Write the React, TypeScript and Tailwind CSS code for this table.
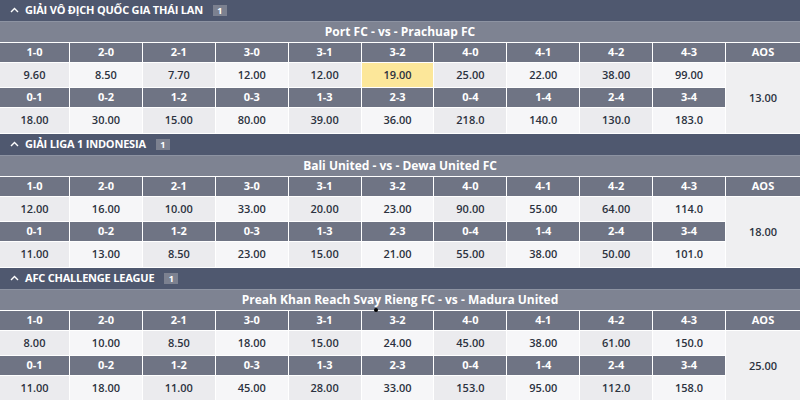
import React from "react";

type Section = {
  league: string;
  match: string;
  v1: string[];
  v2: string[];
  aos: string;
  hl?: number;
};

const H1 = ["1-0", "2-0", "2-1", "3-0", "3-1", "3-2", "4-0", "4-1", "4-2", "4-3"];
const H2 = ["0-1", "0-2", "1-2", "0-3", "1-3", "2-3", "0-4", "1-4", "2-4", "3-4"];

const sections: Section[] = [
  {
    league: "GIẢI VÔ ĐỊCH QUỐC GIA THÁI LAN",
    match: "Port FC - vs - Prachuap FC",
    v1: ["9.60", "8.50", "7.70", "12.00", "12.00", "19.00", "25.00", "22.00", "38.00", "99.00"],
    v2: ["18.00", "30.00", "15.00", "80.00", "39.00", "36.00", "218.0", "140.0", "130.0", "183.0"],
    aos: "13.00",
    hl: 5,
  },
  {
    league: "GIẢI LIGA 1 INDONESIA",
    match: "Bali United - vs - Dewa United FC",
    v1: ["12.00", "16.00", "10.00", "33.00", "20.00", "23.00", "90.00", "55.00", "64.00", "114.0"],
    v2: ["11.00", "13.00", "8.50", "23.00", "15.00", "21.00", "55.00", "38.00", "50.00", "101.0"],
    aos: "18.00",
  },
  {
    league: "AFC CHALLENGE LEAGUE",
    match: "Preah Khan Reach Svay Rieng FC - vs - Madura United",
    v1: ["8.00", "10.00", "8.50", "18.00", "15.00", "24.00", "45.00", "38.00", "61.00", "150.0"],
    v2: ["11.00", "18.00", "11.00", "45.00", "28.00", "33.00", "153.0", "95.00", "112.0", "158.0"],
    aos: "25.00",
  },
];

function HeadCell({ t }: { t: string }) {
  return (
    <div className="bg-[#6f7484] text-white font-bold text-[11px] flex items-center justify-center">
      {t}
    </div>
  );
}

function ValCell({ t, i, hl }: { t: string; i: number; hl?: boolean }) {
  const bg = hl ? "bg-[#fce79a]" : i % 2 === 0 ? "bg-[#ebebee]" : "bg-[#f6f6f8]";
  return (
    <div className={`${bg} text-[#2c3240] font-semibold text-[11px] flex items-center justify-center`}>
      {t}
    </div>
  );
}

function Block({ s }: { s: Section }) {
  return (
    <div className="flex flex-col">
      <div className="h-[22px] bg-[#4f586f] flex items-center pl-[10px] gap-[6px] border-b border-[#8d93a2]">
        <svg width="9" height="6" viewBox="0 0 9 6" className="mb-[1px]">
          <path d="M1 5 L4.5 1.5 L8 5" stroke="white" strokeWidth="1.4" fill="none" />
        </svg>
        <span className="text-white font-bold text-[11px] tracking-[-0.2px]">{s.league}</span>
        <span className="ml-[4px] bg-[#7c8190] text-white font-bold text-[9px] w-[14px] h-[11px] flex items-center justify-center">
          1
        </span>
      </div>
      <div className="h-[21px] bg-[#7e8392] border-b border-white text-white font-bold text-[12px] flex items-center justify-center">
        {s.match}
      </div>
      <div className="grid grid-cols-[69px_repeat(9,1fr)_74px] grid-rows-[19px_24px_19px_25px] gap-px bg-white border-b border-white">
        {H1.map((h) => (
          <HeadCell key={h} t={h} />
        ))}
        <HeadCell t="AOS" />
        {s.v1.map((v, i) => (
          <ValCell key={"a" + i} t={v} i={i} hl={s.hl === i} />
        ))}
        <div className="row-span-3 bg-[#efeff1] text-[#2c3240] font-semibold text-[11px] flex items-center justify-center">
          {s.aos}
        </div>
        {H2.map((h) => (
          <HeadCell key={h} t={h} />
        ))}
        {s.v2.map((v, i) => (
          <ValCell key={"b" + i} t={v} i={i} />
        ))}
      </div>
    </div>
  );
}

export default function App() {
  return (
    <div
      className="relative w-[800px] h-[400px] overflow-hidden bg-white"
      style={{ fontFamily: '"Open Sans", "Noto Sans", sans-serif' }}
    >
      {sections.map((s) => (
        <Block key={s.league} s={s} />
      ))}
      <div className="absolute left-[374px] top-[308px] w-[4px] h-[4px] rounded-full bg-black" />
    </div>
  );
}
